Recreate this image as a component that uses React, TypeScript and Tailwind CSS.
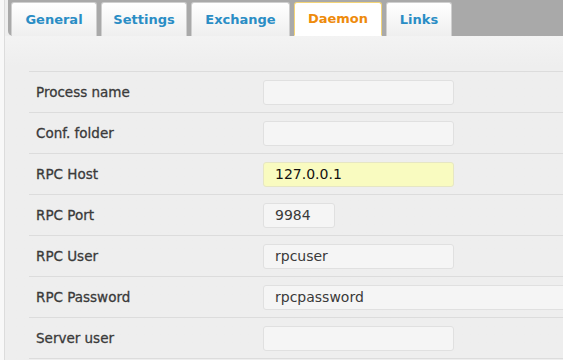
import React from 'react';

const tabs = [
  { name: 'General', w: 'w-[86px]' },
  { name: 'Settings', w: 'w-[86px]' },
  { name: 'Exchange', w: 'w-[99px]' },
  { name: 'Daemon', w: 'w-[88px]', active: true },
  { name: 'Links', w: 'w-[66px]' },
];

type Row = { label: string; value?: string; size?: 'normal' | 'short' | 'wide'; highlight?: boolean };

const rows: Row[] = [
  { label: 'Process name' },
  { label: 'Conf. folder' },
  { label: 'RPC Host', value: '127.0.0.1', highlight: true },
  { label: 'RPC Port', value: '9984', size: 'short' },
  { label: 'RPC User', value: 'rpcuser' },
  { label: 'RPC Password', value: 'rpcpassword', size: 'wide' },
  { label: 'Server user' },
];

function Field({ row }: { row: Row }) {
  const width =
    row.size === 'short' ? 'w-[72px]' : row.size === 'wide' ? 'w-[320px]' : 'w-[191px]';
  const colors = row.highlight
    ? 'bg-[#f9fbc0] border-[#e6e6c4] text-[#111]'
    : 'bg-[#f5f5f5] border-[#e0e0e0] text-[#3a3a3a]';
  return (
    <input
      readOnly
      value={row.value ?? ''}
      className={`${width} ${colors} h-[25px] shrink-0 rounded-[3px] border px-[11px] text-[14px] outline-none`}
      style={{ fontFamily: '"DejaVu Sans", sans-serif' }}
    />
  );
}

export default function App() {
  return (
    <div
      className="w-[563px] h-[360px] overflow-hidden bg-[#f8f8f8] pl-1"
      style={{ fontFamily: '"DejaVu Sans", sans-serif' }}
    >
      <div className="h-full border-l border-[#dcdcdc] bg-[#eeeeee]">
        {/* tab strip */}
        <div className="ml-[3px] flex h-9 items-end gap-1 rounded-bl-[5px] bg-[#a9a9a9] pl-[3px]">
          {tabs.map((t) => (
            <div
              key={t.name}
              className={`${t.w} flex h-[34px] items-center justify-center rounded-t-[3px] border text-[13px] font-bold ${
                t.active
                  ? 'border-[#f3d477] border-b-[#ffffff] bg-white text-[#ee8b0c]'
                  : 'border-[#cfcfcf] border-b-0 bg-gradient-to-b from-white to-[#efefef] text-[#2a8dc5]'
              }`}
            >
              {t.name}
            </div>
          ))}
        </div>

        {/* panel */}
        <div className="bg-gradient-to-b from-[#f3f3f3] to-[#eeeeee] to-[30px] pt-[35px] pl-6">
          <div className="border-b border-[#dcdcdc]">
            {rows.map((r) => (
              <div
                key={r.label}
                className="flex h-[41px] items-center border-t border-[#dcdcdc]"
              >
                <div className="w-[234px] shrink-0 pl-[7px] text-[13.5px] text-[#3a3a3a] [-webkit-text-stroke:0.3px_#3a3a3a]">
                  {r.label}
                </div>
                <Field row={r} />
              </div>
            ))}
          </div>
        </div>
      </div>
    </div>
  );
}
